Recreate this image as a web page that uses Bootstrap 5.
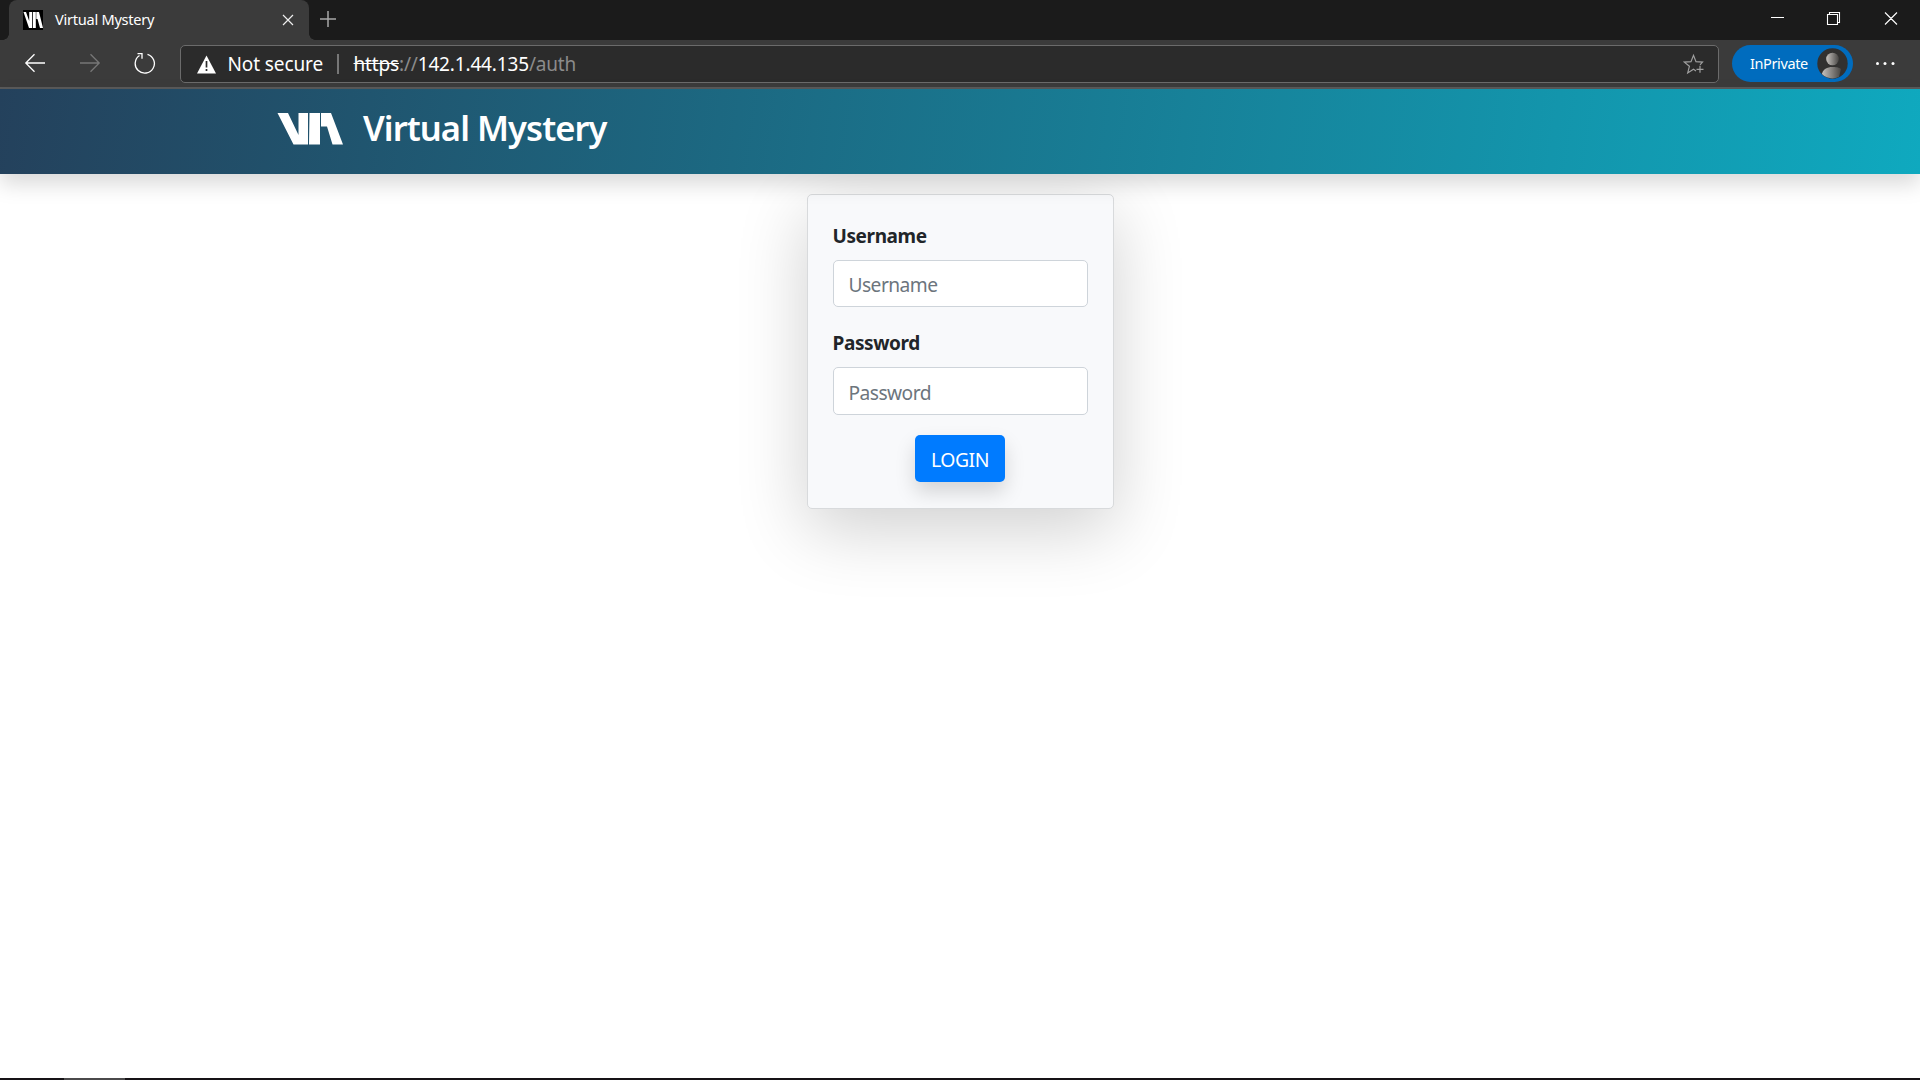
<!DOCTYPE html>
<html lang="en">
<head>
<meta charset="utf-8">
<title>Virtual Mystery</title>
<link href="https://cdn.jsdelivr.net/npm/bootstrap@5.3.0/dist/css/bootstrap.min.css" rel="stylesheet">
<style>
body{font-family:"Noto Sans","Open Sans",sans-serif;width:1920px;height:1080px;overflow:hidden;background:#fff;color:#212529}
svg{display:block;flex:none}
.tabstrip{height:40px;background:#1b1b1b}
.tab{width:300px;height:40px;margin-left:9px;background:#3b3b3b;border-radius:8px 8px 0 0;padding-left:14px;position:relative}
.tab::before,.tab::after{content:"";position:absolute;bottom:0;width:6px;height:6px}
.tab::before{left:-6px;background:radial-gradient(circle at 0 0,transparent 5.5px,#3b3b3b 6px)}
.tab::after{right:-6px;background:radial-gradient(circle at 100% 0,transparent 5.5px,#3b3b3b 6px)}
.tab-name{font-size:14.6px;letter-spacing:-.27px;color:#fff;margin-left:12px;line-height:20px;width:227px;padding-bottom:2px}
.toolbar{height:49px;background:#3b3b3b;border-bottom:2px solid #5a5a5a;padding-top:5px}
.address{width:1539px;height:38px;background:#2b2b2b;border:1px solid #6b6b6b;border-radius:5px;font-size:19px;color:#fff;line-height:36px;padding:0 13px 0 16px}
.secure{width:109px;margin-left:11.5px;letter-spacing:-.1px}
.sep{width:2px;height:20px;background:#777;margin-right:15px}
.url{letter-spacing:-.16px}
.dim{color:#8b8b8b}
.private{width:121px;height:37px;margin-left:13px;border-radius:19px;background:#006cbe;color:#fff;font-size:14.5px;letter-spacing:-.38px;padding:0 5px 0 18px}
.site-head{height:85px;background:linear-gradient(98deg,#24415c,#0fa9bf);box-shadow:0 10px 20px rgba(0,0,0,.15);padding:0 0 6px 277px;position:relative}
.site-name{font-size:34.5px;font-weight:600;letter-spacing:-.93px;color:#fff;line-height:44px;margin-left:20px;padding-bottom:2px}
.login-box{width:307px;height:315px;margin:20px auto 0;background:#f8f9fb;border:1px solid #d8dadc;border-radius:5px;padding:25px;box-shadow:0 20px 70px rgba(0,0,0,.19)}
.login-box label{display:block;font-size:19px;font-weight:700;line-height:30px;padding-top:1px;margin-bottom:9px;letter-spacing:-.4px}
.login-box .form-control{height:47px;border:1px solid #ced4da;border-radius:5px;padding:8px 15px 6px;font-size:19.2px;line-height:30px;letter-spacing:-.55px;margin-bottom:20px;background:#fff}
.login-box .form-control:last-of-type{height:48px}
.login-box .form-control::placeholder{color:#6c757d}
.login-box .btn{width:90px;height:47px;background:#007bff;border:0;border-radius:5px;color:#fff;font-size:19.4px;line-height:30px;letter-spacing:-.5px;padding:3px 0 0;box-shadow:0 10px 20px rgba(0,0,0,.15)}
.taskbar{height:2px;background:#161316}
.running{width:61px;height:2px;margin-left:64px;background:#4b4a4b}
</style>
</head>
<body class="d-flex flex-column">
<div class="tabstrip d-flex">
  <div class="tab d-flex align-items-center">
    <svg width="20" height="20" viewBox="0 0 20 20"><path fill="#000" d="M0 0h20v20H0z"/><path fill="#fff" d="M.5 2H3l3.200 9V2H9v16H6zM9.800 2h3v16h-3zM13.300 2H16l4 16h-3L14.500 9h-1.200z"/></svg>
    <span class="tab-name text-nowrap">Virtual Mystery</span>
    <svg width="12" height="12" viewBox="0 0 12 12"><path d="M1 1l10 10M11 1L1 11" stroke="#eee" stroke-width="1.200"/></svg>
  </div>
  <svg class="ms-2" width="24" height="40" viewBox="0 0 24 40"><path d="M3 19h16M11 11v16" stroke="#a8a8a8" stroke-width="1.500"/></svg>
  <svg class="ms-auto" width="149" height="40" viewBox="0 0 149 40"><path d="M0 17.500h13M56.500 14.500h10v10h-10zM58.500 14.500v-2h10v10h-2M114 12.500l12 12M126 12.500l-12 12" fill="none" stroke="#fff" stroke-width="1.100"/></svg>
</div>
<div class="toolbar d-flex">
  <svg width="156" height="38" viewBox="0 0 156 38"><g fill="none" stroke-width="1.300"><path stroke="#fff" d="M45 18H26M34.500 9.300L25.800 18l8.700 8.700"/><path stroke="#777" d="M80 18h19.500M90.500 9.300l8.700 8.700-8.700 8.700"/><path stroke="#fff" d="M147.500 9.300a9.600 9.600 0 1 1-8 1.200M137.500 8.700h4.500v5"/></g></svg>
  <div class="address d-flex align-items-center text-nowrap ms-4">
    <svg width="19" height="19" viewBox="0 0 19 19"><path fill="#fff" d="M9.500.5L19 18.500H0z"/><path stroke="#2b2b2b" stroke-width="1.700" d="M9.500 6v6.500M9.500 14v2"/></svg>
    <span class="secure">Not secure</span><span class="sep"></span>
    <span class="url"><s>https</s><span class="dim">://</span>142.1.44.135<span class="dim">/auth</span></span>
    <svg class="ms-auto" width="22" height="22" viewBox="0 0 22 22"><path d="M17 11.800l2.500-2.700-6.500-.5-2.500-6.300-2.500 6.300-6.700.5 5.100 4.200-1.700 6.600 5.800-3.600 2.500 1.600M17 12.800v7M13.500 16.300h7" fill="none" stroke="#a0a0a0" stroke-width="1.200"/></svg>
  </div>
  <div class="private d-flex align-items-center">InPrivate
    <svg class="ms-auto" width="31" height="31" viewBox="0 0 31 31"><defs><linearGradient id="person"><stop stop-color="#c8c4c0"/><stop offset="1" stop-color="#484644"/></linearGradient><clipPath id="disc"><circle cx="15.500" cy="15.500" r="15"/></clipPath></defs><circle cx="15.500" cy="15.500" r="15.200" fill="#323130"/><g fill="url(#person)" clip-path="url(#disc)"><circle cx="15.500" cy="11" r="6.300"/><path d="M4.500 27C6 21 10 19 15.500 19S23 20 24 21l-2 8-4 2H8z"/></g></svg>
  </div>
  <svg width="67" height="38" viewBox="0 0 67 38"><g fill="#fff"><circle cx="24.500" cy="18.500" r="1.500"/><circle cx="32" cy="18.500" r="1.500"/><circle cx="40" cy="18.500" r="1.500"/></g></svg>
</div>
<header class="site-head d-flex align-items-center flex-shrink-0">
  <svg width="66" height="33" viewBox="0 0 66 33"><path fill="#fff" d="M.5 1H11L21.500 23V1H31v31.500H16.500zM32.500 1H43v31.500H32zM44 1h10l12 31.500H55.500L50 14.500h-6z"/></svg>
  <span class="site-name text-nowrap">Virtual Mystery</span>
</header>
<main class="flex-grow-1">
  <form class="login-box">
    <label for="user">Username</label>
    <input class="form-control" id="user" placeholder="Username">
    <label for="pass">Password</label>
    <input class="form-control" id="pass" type="password" placeholder="Password">
    <div class="text-center"><button class="btn" type="button">LOGIN</button></div>
  </form>
</main>
<div class="taskbar"><div class="running"></div></div>
<script src="https://cdn.jsdelivr.net/npm/bootstrap@5.3.0/dist/js/bootstrap.bundle.min.js"></script>
</body>
</html>
